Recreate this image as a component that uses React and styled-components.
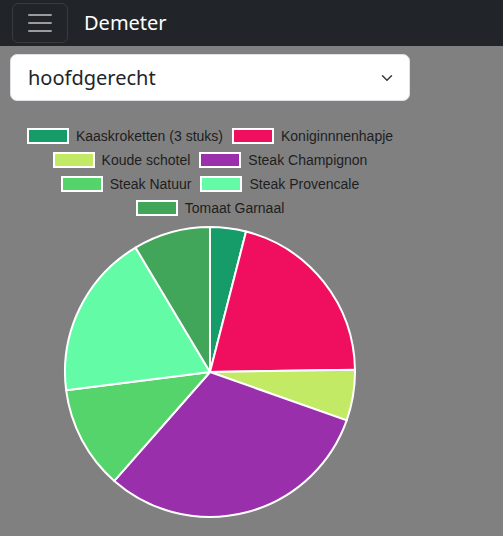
import React from "react";
import styled, { createGlobalStyle } from "styled-components";

const Global = createGlobalStyle`
  html, body { margin: 0; padding: 0; background: #808080; }
  body { font-family: "Noto Sans", "Open Sans", sans-serif; }
  * { box-sizing: border-box; }
`;

const Navbar = styled.nav`
  height: 46px;
  background: #212529;
  display: flex;
  align-items: center;
  padding: 0 12px;
  gap: 16px;
`;

const Toggler = styled.button`
  width: 56px;
  height: 40px;
  padding: 0;
  display: flex;
  align-items: center;
  justify-content: center;
  background: transparent;
  border: 1px solid rgba(255, 255, 255, 0.1);
  border-radius: 6px;
`;

const Brand = styled.span`
  color: #fff;
  font-size: 20px;
  line-height: 30px;
  font-family: "Noto Sans", sans-serif;
`;

const Main = styled.main`
  padding: 8px 10px 0;
  width: 420px;
`;

const Select = styled.div`
  width: 400px;
  height: 47px;
  background: #fff;
  border: 1px solid #dee2e6;
  border-radius: 7px;
  display: flex;
  align-items: center;
  justify-content: space-between;
  padding: 0 14px 0 17px;
  font-size: 20px;
  color: #212529;
`;

const Chart = styled.div`
  width: 400px;
  margin-top: 27px;
  display: flex;
  flex-direction: column;
  align-items: center;
`;

const Legend = styled.ul`
  list-style: none;
  margin: 0;
  padding: 0;
  width: 400px;
  display: flex;
  flex-wrap: wrap;
  justify-content: center;
  column-gap: 9px;
  row-gap: 8px;
`;

const LegendItem = styled.li`
  display: flex;
  align-items: center;
  gap: 7px;
  height: 16px;
  font-family: "Liberation Sans", Arial, sans-serif;
  font-size: 14px;
  color: #1e1e1e;
  white-space: nowrap;
`;

const Swatch = styled.span`
  width: 42px;
  height: 16px;
  border: 2px solid #fff;
  background: ${(p) => p.$color};
`;

const PieSvg = styled.svg`
  display: block;
  margin-top: 8px;
`;

const data = [
  { label: "Kaaskroketten (3 stuks)", color: "#159c69", end: 14.4 },
  { label: "Koniginnnenhapje", color: "#f00e5f", end: 89.1 },
  { label: "Koude schotel", color: "#c2ea64", end: 109.5 },
  { label: "Steak Champignon", color: "#9a2fab", end: 221.3 },
  { label: "Steak Natuur", color: "#56d46c", end: 262.8 },
  { label: "Steak Provencale", color: "#63fba6", end: 329.1 },
  { label: "Tomaat Garnaal", color: "#41a55a", end: 360 },
];

const CX = 200;
const CY = 148;
const R = 145;

function pt(deg) {
  const a = ((deg - 90) * Math.PI) / 180;
  return [CX + R * Math.cos(a), CY + R * Math.sin(a)];
}

function slicePath(start, end) {
  const [x1, y1] = pt(start);
  const [x2, y2] = pt(end);
  const large = end - start > 180 ? 1 : 0;
  return `M${CX} ${CY} L${x1.toFixed(2)} ${y1.toFixed(2)} A${R} ${R} 0 ${large} 1 ${x2.toFixed(2)} ${y2.toFixed(2)} Z`;
}

export default function App() {
  let start = 0;
  const slices = data.map((d) => {
    const s = { ...d, start };
    start = d.end;
    return s;
  });
  return (
    <>
      <Global />
      <Navbar>
        <Toggler aria-label="menu">
          <svg width="30" height="30" viewBox="0 0 30 30">
            <path
              d="M4 7h22M4 15h22M4 23h22"
              stroke="rgba(255,255,255,0.55)"
              strokeWidth="2"
              strokeLinecap="round"
            />
          </svg>
        </Toggler>
        <Brand>Demeter</Brand>
      </Navbar>
      <Main>
        <Select>
          <span>hoofdgerecht</span>
          <svg width="16" height="12" viewBox="0 0 16 16">
            <path
              d="m2 5 6 6 6-6"
              fill="none"
              stroke="#343a40"
              strokeWidth="2"
              strokeLinecap="round"
              strokeLinejoin="round"
            />
          </svg>
        </Select>
        <Chart>
          <Legend>
            {data.map((d) => (
              <LegendItem key={d.label}>
                <Swatch $color={d.color} />
                {d.label}
              </LegendItem>
            ))}
          </Legend>
          <PieSvg width="400" height="296" viewBox="0 0 400 296">
            {slices.map((s) => (
              <path
                key={s.label}
                d={slicePath(s.start, s.end)}
                fill={s.color}
                stroke="#fff"
                strokeWidth="2"
                strokeLinejoin="round"
              />
            ))}
          </PieSvg>
        </Chart>
      </Main>
    </>
  );
}
